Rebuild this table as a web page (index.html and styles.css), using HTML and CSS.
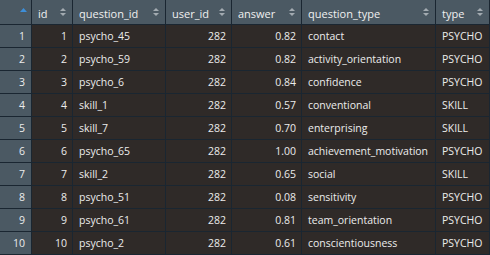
FILE: index.html
```html
<!DOCTYPE html>
<html>
<head>
<meta charset="utf-8">
<link rel="stylesheet" href="styles.css">
</head>
<body>
<div class="grid">
  <div class="hd rn-hd"><svg class="asc" width="7" height="4" viewBox="0 0 7 4"><polygon points="0,4 3.5,0 7,4" fill="#3d8fd9"/></svg></div>
  <div class="hd"><span>id</span><svg class="sort" width="6" height="8" viewBox="0 0 6 8"><polygon points="0,3 3,0 6,3" /><polygon points="0,5 6,5 3,8" /></svg></div>
  <div class="hd"><span>question_id</span><svg class="sort" width="6" height="8" viewBox="0 0 6 8"><polygon points="0,3 3,0 6,3" /><polygon points="0,5 6,5 3,8" /></svg></div>
  <div class="hd"><span>user_id</span><svg class="sort" width="6" height="8" viewBox="0 0 6 8"><polygon points="0,3 3,0 6,3" /><polygon points="0,5 6,5 3,8" /></svg></div>
  <div class="hd"><span>answer</span><svg class="sort" width="6" height="8" viewBox="0 0 6 8"><polygon points="0,3 3,0 6,3" /><polygon points="0,5 6,5 3,8" /></svg></div>
  <div class="hd"><span>question_type</span><svg class="sort" width="6" height="8" viewBox="0 0 6 8"><polygon points="0,3 3,0 6,3" /><polygon points="0,5 6,5 3,8" /></svg></div>
  <div class="hd"><span>type</span><svg class="sort" width="6" height="8" viewBox="0 0 6 8"><polygon points="0,3 3,0 6,3" /><polygon points="0,5 6,5 3,8" /></svg></div>

  <div class="rn">1</div><div class="c num">1</div><div class="c">psycho_45</div><div class="c num">282</div><div class="c num">0.82</div><div class="c">contact</div><div class="c">PSYCHO</div>
  <div class="rn">2</div><div class="c num">2</div><div class="c">psycho_59</div><div class="c num">282</div><div class="c num">0.82</div><div class="c">activity_orientation</div><div class="c">PSYCHO</div>
  <div class="rn">3</div><div class="c num">3</div><div class="c">psycho_6</div><div class="c num">282</div><div class="c num">0.84</div><div class="c">confidence</div><div class="c">PSYCHO</div>
  <div class="rn">4</div><div class="c num">4</div><div class="c">skill_1</div><div class="c num">282</div><div class="c num">0.57</div><div class="c">conventional</div><div class="c">SKILL</div>
  <div class="rn">5</div><div class="c num">5</div><div class="c">skill_7</div><div class="c num">282</div><div class="c num">0.70</div><div class="c">enterprising</div><div class="c">SKILL</div>
  <div class="rn">6</div><div class="c num">6</div><div class="c">psycho_65</div><div class="c num">282</div><div class="c num">1.00</div><div class="c">achievement_motivation</div><div class="c">PSYCHO</div>
  <div class="rn">7</div><div class="c num">7</div><div class="c">skill_2</div><div class="c num">282</div><div class="c num">0.65</div><div class="c">social</div><div class="c">SKILL</div>
  <div class="rn">8</div><div class="c num">8</div><div class="c">psycho_51</div><div class="c num">282</div><div class="c num">0.08</div><div class="c">sensitivity</div><div class="c">PSYCHO</div>
  <div class="rn">9</div><div class="c num">9</div><div class="c">psycho_61</div><div class="c num">282</div><div class="c num">0.81</div><div class="c">team_orientation</div><div class="c">PSYCHO</div>
  <div class="rn">10</div><div class="c num">10</div><div class="c">psycho_2</div><div class="c num">282</div><div class="c num">0.61</div><div class="c">conscientiousness</div><div class="c">PSYCHO</div>
</div>
</body>
</html>
```
FILE: styles.css
```css
html, body {
  margin: 0;
  padding: 0;
  background: #2f2a28;
}
.grid {
  display: grid;
  grid-template-columns: 31px 40px 92px 65px 69px 133px 53px;
  grid-template-rows: 24px repeat(10, 22px);
  gap: 1px;
  padding: 0 1px 1px 0;
  width: 489px;
  background: #1a2631;
  font-family: "Open Sans", "Liberation Sans", sans-serif;
  font-size: 10.5px;
  color: #ececec;
}
.hd {
  background: #4b5963;
  display: flex;
  align-items: center;
  justify-content: space-between;
  padding: 2px 6px 0 6px;
  color: #f0f0f0;
  font-size: 11px;
}
.rn-hd {
  justify-content: flex-end;
  padding: 0 4px 4px 0;
}
.sort polygon {
  fill: #a3abb1;
}
.sort {
  margin-bottom: 2px;
}
.rn {
  background: #4b5963;
  display: flex;
  align-items: center;
  justify-content: flex-end;
  padding-right: 6px;
}
.c {
  background: #2f2a28;
  display: flex;
  align-items: center;
  padding: 0 6px;
  white-space: nowrap;
  overflow: hidden;
}
.num {
  justify-content: flex-end;
  padding-right: 5px;
}
```
